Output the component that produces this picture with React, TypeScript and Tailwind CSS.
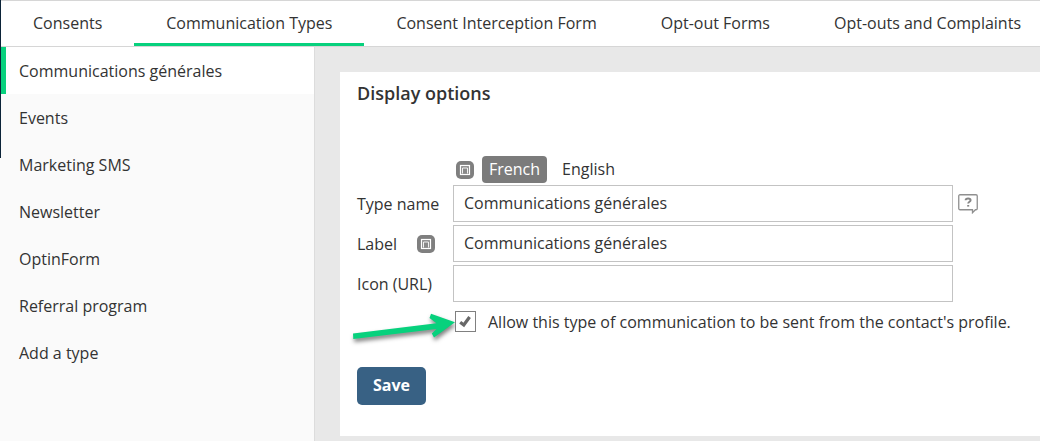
import { useState } from "react";

const tabs = [
  "Consents",
  "Communication Types",
  "Consent Interception Form",
  "Opt-out Forms",
  "Opt-outs and Complaints",
];

const types = [
  "Communications générales",
  "Events",
  "Marketing SMS",
  "Newsletter",
  "OptinForm",
  "Referral program",
  "Add a type",
];

function FieldIcon() {
  return (
    <svg width="18" height="18" viewBox="0 0 18 18" fill="none" aria-hidden="true">
      <rect width="18" height="18" rx="5" fill="#7f7f7f" />
      <rect x="4.5" y="4.5" width="9" height="9" fill="#8a8a8a" stroke="#fff" strokeWidth="1.2" />
      <path d="M6.5 12.5V7h5v5.5" stroke="#f2f2f2" />
    </svg>
  );
}

function HelpIcon() {
  return (
    <svg width="20" height="20" viewBox="0 0 20 20" fill="none" aria-hidden="true">
      <path
        d="M2 .75h16a1.25 1.25 0 0 1 1.25 1.25v12.5a1.25 1.25 0 0 1-1.25 1.25h-.6L14.5 18.7v-2.95H2a1.25 1.25 0 0 1-1.25-1.25V2A1.25 1.25 0 0 1 2 .75z"
        stroke="#8f8f8f"
        strokeWidth="1.3"
      />
      <path d="M7.6 6.3c.1-2.4 5-2.4 5 0 0 1.5-2.4 1.4-2.4 3.2" stroke="#858585" strokeWidth="1.9" />
      <path d="M9.2 11h2v1.6h-2z" fill="#858585" />
    </svg>
  );
}

function Arrow() {
  return (
    <svg
      className="pointer-events-none absolute top-0 right-full"
      width="106"
      height="40"
      viewBox="0 0 106 40"
      aria-hidden="true"
    >
      <path
        d="M4 22.5 87.5 12.2 80.5 7 82 2.8 106 11.2 85 26.4 82.8 22.6 87.5 18 4.3 28z"
        fill="#07d17d"
        className="drop-shadow-[1px_3px_2px_rgba(0,0,0,0.5)]"
      />
    </svg>
  );
}

export default function App() {
  const [tab, setTab] = useState("Communication Types");
  const [type, setType] = useState(types[0]);
  const [lang, setLang] = useState("French");
  const [allowed, setAllowed] = useState(true);

  const inputClass =
    "h-[37px] w-full max-w-[500px] border border-[#c3c3c3] bg-white px-2.5 pb-0.5 outline-none focus:border-[#7f7f7f]";

  return (
    <div className="flex min-h-screen bg-[#fafafa] font-['Open_Sans',sans-serif] text-base leading-6 text-[#333]">
      <div className="h-[158px] w-px shrink-0 bg-[#0b2338]" />
      <div className="flex min-w-0 flex-1 flex-col">
        <nav className="flex h-[47px] overflow-hidden border-y border-[#d6d6d6] bg-white whitespace-nowrap">
          {tabs.map((name) => (
            <button
              key={name}
              onClick={() => setTab(name)}
              className={`shrink-0 cursor-pointer border-b-3 px-8 pt-[2px] ${
                tab === name ? "border-[#07d17d]" : "border-transparent"
              }`}
            >
              {name}
            </button>
          ))}
        </nav>

        <div className="flex flex-1">
          <aside className="w-[314px] shrink-0 border-r border-[#dcdcdc]">
            {types.map((name) => (
              <button
                key={name}
                onClick={() => setType(name)}
                className={`block h-[47px] w-full cursor-pointer border-l-5 px-[13px] text-left ${
                  type === name ? "border-[#07d17d] bg-white" : "border-transparent"
                }`}
              >
                {name}
              </button>
            ))}
          </aside>

          <main className="min-w-0 flex-1 bg-[#e8e8e8] pt-[25px] pb-[5px] pl-[25px]">
            <form
              onSubmit={(e) => e.preventDefault()}
              className="h-full bg-white px-[17px] pt-[9px]"
            >
              <h2 className="text-lg leading-6 font-semibold">Display options</h2>

              <div className="mt-[51px] grid grid-cols-[96px_1fr] items-center gap-y-[3px]">
                <div className="col-start-2 -mb-px flex h-[27px] items-center pl-[3px]">
                  <FieldIcon />
                  <button
                    type="button"
                    onClick={() => setLang("French")}
                    className={`ml-2 h-[27px] cursor-pointer rounded px-[7px] pb-0.5 ${
                      lang === "French" ? "bg-[#7b7b7b] text-white" : ""
                    }`}
                  >
                    French
                  </button>
                  <button
                    type="button"
                    onClick={() => setLang("English")}
                    className={`ml-2 h-[27px] cursor-pointer rounded px-[7px] pb-0.5 ${
                      lang === "English" ? "bg-[#7b7b7b] text-white" : ""
                    }`}
                  >
                    English
                  </button>
                </div>

                <label htmlFor="type-name">Type name</label>
                <div className="flex items-center gap-[5px]">
                  <input
                    id="type-name"
                    className={inputClass}
                    defaultValue="Communications générales"
                  />
                  <button type="button" aria-label="Help" className="shrink-0 cursor-pointer">
                    <HelpIcon />
                  </button>
                </div>

                <div className="flex items-center gap-5">
                  <label htmlFor="label">Label</label>
                  <FieldIcon />
                </div>
                <input id="label" className={inputClass} defaultValue="Communications générales" />

                <label htmlFor="icon-url">Icon (URL)</label>
                <input id="icon-url" className={inputClass} />

                <div className="col-start-2 flex h-[33px] items-center pl-[2px]">
                  <div className="relative grid size-[21px] shrink-0 place-items-center">
                    <Arrow />
                    <input
                      id="allow"
                      type="checkbox"
                      checked={allowed}
                      onChange={(e) => setAllowed(e.target.checked)}
                      className="col-start-1 row-start-1 size-[21px] cursor-pointer appearance-none border border-[#808080] bg-white"
                    />
                    {allowed && (
                      <svg
                        className="pointer-events-none col-start-1 row-start-1"
                        width="15"
                        height="15"
                        viewBox="0 0 15 15"
                        aria-hidden="true"
                      >
                        <path
                          d="M2.2 8.2l3.6 2.8L11.6 3"
                          fill="none"
                          stroke="#686868"
                          strokeWidth="3.2"
                        />
                      </svg>
                    )}
                  </div>
                  <label htmlFor="allow" className="ml-3">
                    Allow this type of communication to be sent from the contact's profile.
                  </label>
                </div>
              </div>

              <button
                type="submit"
                className="mt-[29px] mb-[31px] h-[38px] cursor-pointer rounded-[5px] bg-[#386184] px-4 pb-0.5 font-bold text-white"
              >
                Save
              </button>
            </form>
          </main>
        </div>
      </div>
    </div>
  );
}
